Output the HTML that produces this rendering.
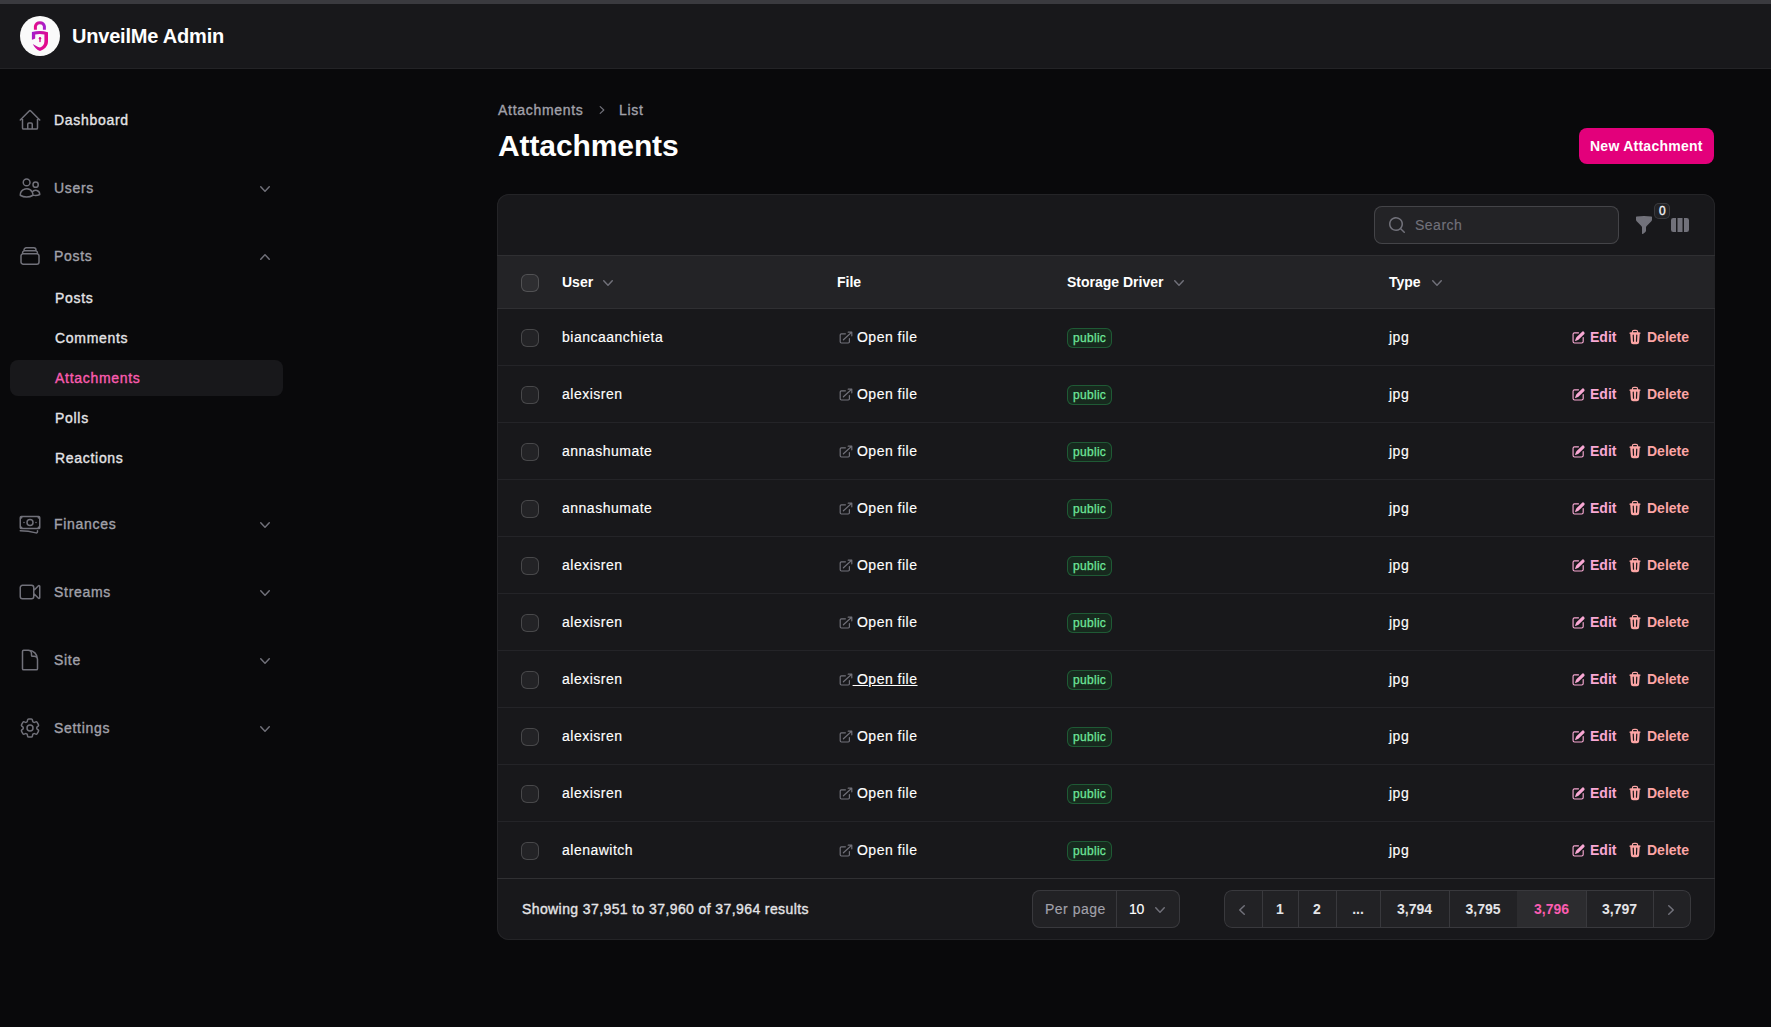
<!DOCTYPE html><html><head><meta charset="utf-8"><style>
*{box-sizing:border-box;margin:0;padding:0}
html,body{width:1771px;height:1027px;overflow:hidden;background:#09090b;font-family:"Liberation Sans",sans-serif;color:#fff}
.abs{position:absolute}
.t{white-space:nowrap;line-height:1}
</style></head><body>
<div class="abs" style="left:0;top:0;width:1771px;height:4px;background:#3a3a3f"></div>
<div class="abs" style="left:0;top:4px;width:1771px;height:65px;background:#18181b;border-bottom:1px solid #232326"></div>
<svg class="abs" style="left:20px;top:16px" width="40" height="40" viewBox="0 0 40 40">
<defs><linearGradient id="lg" x1="0" y1="0" x2="1" y2="0.5"><stop offset="0" stop-color="#9a1fd4"/><stop offset="0.5" stop-color="#cc12a4"/><stop offset="1" stop-color="#e6098a"/></linearGradient>
<linearGradient id="lg2" x1="0" y1="0" x2="1" y2="0"><stop offset="0" stop-color="#e40c8c"/><stop offset="1" stop-color="#a51fcc"/></linearGradient></defs>
<circle cx="20" cy="20" r="20" fill="#fafafa"/>
<path d="M15.4 13.7 V10.3 A4.6 4.6 0 0 1 24.4 10.3 V13.7" fill="none" stroke="url(#lg2)" stroke-width="3"/>
<path d="M11.9 16.1 Q20 14.0 28 16.2 L28 25.5 C28 30 24.5 33.5 20 35 C16.8 33.8 14.2 31.4 12.8 28 C15 29.3 17.5 30.8 20 31.6 C23 30.4 24.4 28 24.4 25.2 L24.4 18.5 Q20 17.6 15.2 18.4 L15.2 22.4 C14.2 22.8 13 23.3 11.9 23.7 Z" fill="url(#lg)"/>
<circle cx="20" cy="22.3" r="1.2" fill="#d8108f"/><rect x="19.3" y="22.5" width="1.4" height="3.6" fill="#d8108f"/>
</svg>
<div class="abs t" style="left:72px;top:26px;font-size:20px;color:#ffffff;font-weight:bold;letter-spacing:-0.2px">UnveilMe Admin</div>
<div class="abs" style="left:10px;top:360px;width:273px;height:36px;border-radius:8px;background:#18181b"></div>
<svg class="abs" style="left:18px;top:108px" width="24" height="24" viewBox="0 0 24 24" fill="none" stroke="#71717a" stroke-width="1.5" stroke-linecap="round" stroke-linejoin="round" ><path d="M2.25 12l8.954-8.955c.44-.439 1.152-.439 1.591 0L21.75 12M4.5 9.75v10.125c0 .621.504 1.125 1.125 1.125H9.75v-4.875c0-.621.504-1.125 1.125-1.125h2.25c.621 0 1.125.504 1.125 1.125V21h4.125c.621 0 1.125-.504 1.125-1.125V9.75M8.25 21h8.25"/></svg>
<div class="abs t" style="left:54px;top:113px;font-size:14px;color:#e4e4e7;font-weight:normal;letter-spacing:0.7px;-webkit-text-stroke:0.35px #e4e4e7;">Dashboard</div>
<svg class="abs" style="left:18px;top:176px" width="24" height="24" viewBox="0 0 24 24" fill="none" stroke="#71717a" stroke-width="1.5" stroke-linecap="round" stroke-linejoin="round" ><path d="M15 19.128a9.38 9.38 0 002.625.372 9.337 9.337 0 004.121-.952 4.125 4.125 0 00-7.533-2.493M15 19.128v-.003c0-1.113-.285-2.16-.786-3.07M15 19.128v.106A12.318 12.318 0 018.624 21c-2.331 0-4.512-.645-6.374-1.766l-.001-.109a6.375 6.375 0 0111.964-3.07M12 6.375a3.375 3.375 0 11-6.75 0 3.375 3.375 0 016.75 0zm8.25 2.25a2.625 2.625 0 11-5.25 0 2.625 2.625 0 015.25 0z"/></svg>
<div class="abs t" style="left:54px;top:181px;font-size:14px;color:#a1a1aa;font-weight:normal;letter-spacing:0.7px;-webkit-text-stroke:0.35px #a1a1aa;">Users</div>
<svg class="abs" style="left:255px;top:179px" width="20" height="20" viewBox="0 0 20 20" fill="#71717a" ><path fill-rule="evenodd" clip-rule="evenodd" d="M5.23 7.21a.75.75 0 011.06.02L10 11.168l3.71-3.938a.75.75 0 111.08 1.04l-4.25 4.5a.75.75 0 01-1.08 0l-4.25-4.5a.75.75 0 01.02-1.06z"/></svg>
<svg class="abs" style="left:18px;top:244px" width="24" height="24" viewBox="0 0 24 24" fill="none" stroke="#71717a" stroke-width="1.5" stroke-linecap="round" stroke-linejoin="round" ><path d="M6 6.878V6a2.25 2.25 0 012.25-2.25h7.5A2.25 2.25 0 0118 6v.878m-12 0c.235-.083.487-.128.75-.128h10.5c.263 0 .515.045.75.128m-12 0A2.25 2.25 0 004.5 9v.878m13.5-3A2.25 2.25 0 0119.5 9v.878m0 0a2.246 2.246 0 00-.75-.128H5.25c-.263 0-.515.045-.75.128m15 0A2.25 2.25 0 0121 12v6a2.25 2.25 0 01-2.25 2.25H5.25A2.25 2.25 0 013 18v-6c0-.98.626-1.813 1.5-2.122"/></svg>
<div class="abs t" style="left:54px;top:249px;font-size:14px;color:#a1a1aa;font-weight:normal;letter-spacing:0.7px;-webkit-text-stroke:0.35px #a1a1aa;">Posts</div>
<svg class="abs" style="left:255px;top:247px" width="20" height="20" viewBox="0 0 20 20" fill="#71717a" ><path fill-rule="evenodd" clip-rule="evenodd" d="M14.77 12.79a.75.75 0 01-1.06-.02L10 8.832 6.29 12.77a.75.75 0 11-1.08-1.04l4.25-4.5a.75.75 0 011.08 0l4.25 4.5a.75.75 0 01-.02 1.06z"/></svg>
<svg class="abs" style="left:18px;top:512px" width="24" height="24" viewBox="0 0 24 24" fill="none" stroke="#71717a" stroke-width="1.5" stroke-linecap="round" stroke-linejoin="round" ><path d="M2.25 18.75a60.07 60.07 0 0115.797 2.101c.727.198 1.453-.342 1.453-1.096V18.75M3.75 4.5v.75A.75.75 0 013 6h-.75m0 0v-.375c0-.621.504-1.125 1.125-1.125H20.25M2.25 6v9m18-10.5v.75c0 .414.336.75.75.75h.75m-1.5-1.5h.375c.621 0 1.125.504 1.125 1.125v9.75c0 .621-.504 1.125-1.125 1.125h-.375m1.5-1.5H21a.75.75 0 00-.75.75v.75m0 0H3.75m0 0h-.375a1.125 1.125 0 01-1.125-1.125V15m1.5 1.5v-.75A.75.75 0 003 15h-.75M15 10.5a3 3 0 11-6 0 3 3 0 016 0zm3 0h.008v.008H18V10.5zm-12 0h.008v.008H6V10.5z"/></svg>
<div class="abs t" style="left:54px;top:517px;font-size:14px;color:#a1a1aa;font-weight:normal;letter-spacing:0.7px;-webkit-text-stroke:0.35px #a1a1aa;">Finances</div>
<svg class="abs" style="left:255px;top:515px" width="20" height="20" viewBox="0 0 20 20" fill="#71717a" ><path fill-rule="evenodd" clip-rule="evenodd" d="M5.23 7.21a.75.75 0 011.06.02L10 11.168l3.71-3.938a.75.75 0 111.08 1.04l-4.25 4.5a.75.75 0 01-1.08 0l-4.25-4.5a.75.75 0 01.02-1.06z"/></svg>
<svg class="abs" style="left:18px;top:580px" width="24" height="24" viewBox="0 0 24 24" fill="none" stroke="#71717a" stroke-width="1.5" stroke-linecap="round" stroke-linejoin="round" ><path d="M15.75 10.5l4.72-4.72a.75.75 0 011.28.53v11.38a.75.75 0 01-1.28.53l-4.72-4.72M4.5 18.75h9a2.25 2.25 0 002.25-2.25v-9a2.25 2.25 0 00-2.25-2.25h-9A2.25 2.25 0 002.25 7.5v9a2.25 2.25 0 002.25 2.25z"/></svg>
<div class="abs t" style="left:54px;top:585px;font-size:14px;color:#a1a1aa;font-weight:normal;letter-spacing:0.7px;-webkit-text-stroke:0.35px #a1a1aa;">Streams</div>
<svg class="abs" style="left:255px;top:583px" width="20" height="20" viewBox="0 0 20 20" fill="#71717a" ><path fill-rule="evenodd" clip-rule="evenodd" d="M5.23 7.21a.75.75 0 011.06.02L10 11.168l3.71-3.938a.75.75 0 111.08 1.04l-4.25 4.5a.75.75 0 01-1.08 0l-4.25-4.5a.75.75 0 01.02-1.06z"/></svg>
<svg class="abs" style="left:18px;top:648px" width="24" height="24" viewBox="0 0 24 24" fill="none" stroke="#71717a" stroke-width="1.5" stroke-linecap="round" stroke-linejoin="round" ><path d="M19.5 14.25v-2.625a3.375 3.375 0 00-3.375-3.375h-1.5A1.125 1.125 0 0113.5 7.125v-1.5a3.375 3.375 0 00-3.375-3.375H8.25m2.25 0H5.625c-.621 0-1.125.504-1.125 1.125v17.25c0 .621.504 1.125 1.125 1.125h12.75c.621 0 1.125-.504 1.125-1.125V11.25a9 9 0 00-9-9z"/></svg>
<div class="abs t" style="left:54px;top:653px;font-size:14px;color:#a1a1aa;font-weight:normal;letter-spacing:0.7px;-webkit-text-stroke:0.35px #a1a1aa;">Site</div>
<svg class="abs" style="left:255px;top:651px" width="20" height="20" viewBox="0 0 20 20" fill="#71717a" ><path fill-rule="evenodd" clip-rule="evenodd" d="M5.23 7.21a.75.75 0 011.06.02L10 11.168l3.71-3.938a.75.75 0 111.08 1.04l-4.25 4.5a.75.75 0 01-1.08 0l-4.25-4.5a.75.75 0 01.02-1.06z"/></svg>
<svg class="abs" style="left:18px;top:716px" width="24" height="24" viewBox="0 0 24 24" fill="none" stroke="#71717a" stroke-width="1.5" stroke-linecap="round" stroke-linejoin="round" ><path d="M9.594 3.94c.09-.542.56-.94 1.11-.94h2.593c.55 0 1.02.398 1.11.94l.213 1.281c.063.374.313.686.645.87.074.04.147.083.22.127.324.196.72.257 1.075.124l1.217-.456a1.125 1.125 0 011.37.49l1.296 2.247a1.125 1.125 0 01-.26 1.431l-1.003.827c-.293.24-.438.613-.431.992a6.759 6.759 0 010 .255c-.007.378.138.75.43.99l1.005.828c.424.35.534.954.26 1.43l-1.298 2.247a1.125 1.125 0 01-1.369.491l-1.217-.456c-.355-.133-.75-.072-1.076.124a6.57 6.57 0 01-.22.128c-.331.183-.581.495-.644.869l-.213 1.28c-.09.543-.56.941-1.11.941h-2.594c-.55 0-1.020-.398-1.110-.94l-.213-1.281c-.062-.374-.312-.686-.644-.87a6.52 6.52 0 01-.22-.127c-.325-.196-.72-.257-1.076-.124l-1.217.456a1.125 1.125 0 01-1.369-.49l-1.297-2.247a1.125 1.125 0 01.26-1.431l1.004-.827c.292-.24.437-.613.43-.992a6.932 6.932 0 010-.255c.007-.378-.138-.75-.43-.99l-1.004-.828a1.125 1.125 0 01-.26-1.43l1.297-2.247a1.125 1.125 0 011.37-.491l1.216.456c.356.133.751.072 1.076-.124.072-.044.146-.087.22-.128.332-.183.582-.495.644-.869l.214-1.281zM15 12a3 3 0 11-6 0 3 3 0 016 0z"/></svg>
<div class="abs t" style="left:54px;top:721px;font-size:14px;color:#a1a1aa;font-weight:normal;letter-spacing:0.7px;-webkit-text-stroke:0.35px #a1a1aa;">Settings</div>
<svg class="abs" style="left:255px;top:719px" width="20" height="20" viewBox="0 0 20 20" fill="#71717a" ><path fill-rule="evenodd" clip-rule="evenodd" d="M5.23 7.21a.75.75 0 011.06.02L10 11.168l3.71-3.938a.75.75 0 111.08 1.04l-4.25 4.5a.75.75 0 01-1.08 0l-4.25-4.5a.75.75 0 01.02-1.06z"/></svg>
<div class="abs t" style="left:55px;top:291px;font-size:14px;color:#e4e4e7;font-weight:normal;letter-spacing:0.7px;-webkit-text-stroke:0.35px #e4e4e7;">Posts</div>
<div class="abs t" style="left:55px;top:331px;font-size:14px;color:#e4e4e7;font-weight:normal;letter-spacing:0.7px;-webkit-text-stroke:0.35px #e4e4e7;">Comments</div>
<div class="abs t" style="left:55px;top:371px;font-size:14px;color:#fa5cb0;font-weight:normal;letter-spacing:0.7px;-webkit-text-stroke:0.35px #fa5cb0;">Attachments</div>
<div class="abs t" style="left:55px;top:411px;font-size:14px;color:#e4e4e7;font-weight:normal;letter-spacing:0.7px;-webkit-text-stroke:0.35px #e4e4e7;">Polls</div>
<div class="abs t" style="left:55px;top:451px;font-size:14px;color:#e4e4e7;font-weight:normal;letter-spacing:0.7px;-webkit-text-stroke:0.35px #e4e4e7;">Reactions</div>
<div class="abs t" style="left:498px;top:103px;font-size:14px;color:#a1a1aa;font-weight:normal;letter-spacing:0.7px;-webkit-text-stroke:0.35px #a1a1aa;">Attachments</div>
<svg class="abs" style="left:594px;top:102px" width="16" height="16" viewBox="0 0 20 20" fill="#71717a" ><path fill-rule="evenodd" clip-rule="evenodd" d="M7.21 14.77a.75.75 0 01.02-1.06L11.168 10 7.23 6.29a.75.75 0 111.04-1.08l4.5 4.25a.75.75 0 010 1.08l-4.5 4.25a.75.75 0 01-1.06-.02z"/></svg>
<div class="abs t" style="left:619px;top:103px;font-size:14px;color:#a1a1aa;font-weight:normal;letter-spacing:0.7px;-webkit-text-stroke:0.35px #a1a1aa;">List</div>
<div class="abs t" style="left:498px;top:131px;font-size:30px;color:#ffffff;font-weight:bold;letter-spacing:-0.1px">Attachments</div>
<div class="abs" style="left:1579px;top:128px;width:135px;height:36px;border-radius:8px;background:#e3007b"></div>
<div class="abs t" style="left:1590px;top:139px;font-size:14px;color:#ffffff;font-weight:bold;letter-spacing:0.25px">New Attachment</div>
<div class="abs" style="left:497px;top:194px;width:1218px;height:746px;border-radius:12px;background:#18181b;box-shadow:0 0 0 1px #242427 inset;overflow:hidden">
<div class="abs" style="left:0;top:61px;width:1218px;height:54px;background:#232326;border-top:1px solid #2f2f32;border-bottom:1px solid #2f2f32"></div>
<div class="abs" style="left:877px;top:12px;width:245px;height:38px;border-radius:8px;background:#232326;box-shadow:inset 0 0 0 1px #444448"></div>
<svg class="abs" style="left:890px;top:21px" width="20" height="20" viewBox="0 0 20 20" fill="#71717a" ><path fill-rule="evenodd" clip-rule="evenodd" d="M9 3.5a5.5 5.5 0 100 11 5.5 5.5 0 000-11zM2 9a7 7 0 1112.452 4.391l3.328 3.329a.75.75 0 11-1.06 1.06l-3.329-3.328A7 7 0 012 9z"/></svg>
<div class="abs t" style="left:918px;top:24px;font-size:14px;color:#71717a;font-weight:normal;letter-spacing:0.5px;-webkit-text-stroke:0.15px #71717a;">Search</div>
<svg class="abs" style="left:1137px;top:21px" width="20" height="20" viewBox="0 0 20 20" fill="#71717a" ><path fill-rule="evenodd" clip-rule="evenodd" d="M2.628 1.601C5.028 1.206 7.49 1 10 1s4.973.206 7.372.601a.75.75 0 01.628.74v2.288a2.25 2.25 0 01-.659 1.59l-4.682 4.683a2.25 2.25 0 00-.659 1.59v3.037c0 .684-.31 1.33-.844 1.757l-1.937 1.55A.75.75 0 018 18.25v-5.757a2.25 2.25 0 00-.659-1.591L2.659 6.22A2.25 2.25 0 012 4.629V2.34a.75.75 0 01.628-.74z"/></svg>
<div class="abs" style="left:1157px;top:9px;width:16px;height:16px;border-radius:5px;background:#222225;box-shadow:inset 0 0 0 1px #3a3a3e"></div>
<div class="abs t" style="left:1162px;top:11px;font-size:12px;color:#f4f4f5;font-weight:normal;letter-spacing:0.7px;-webkit-text-stroke:0.35px #f4f4f5;letter-spacing:0">0</div>
<svg class="abs" style="left:1173px;top:21px" width="20" height="20" viewBox="0 0 20 20" fill="#71717a" ><path fill-rule="evenodd" clip-rule="evenodd" d="M14 17h2.75A2.25 2.25 0 0019 14.75v-9.5A2.25 2.25 0 0016.75 3H14v14zM12.5 3h-5v14h5V3zM3.25 3H6v14H3.25A2.25 2.25 0 011 14.75v-9.5A2.25 2.25 0 013.25 3z"/></svg>
<div class="abs" style="left:24px;top:80px;width:18px;height:18px;border-radius:6px;background:rgba(255,255,255,0.05);box-shadow:inset 0 0 0 1px rgba(255,255,255,0.17)"></div>
<div class="abs t" style="left:65px;top:81px;font-size:14px;color:#ffffff;font-weight:bold;">User</div>
<svg class="abs" style="left:101px;top:79px" width="20" height="20" viewBox="0 0 20 20" fill="#71717a" ><path fill-rule="evenodd" clip-rule="evenodd" d="M5.23 7.21a.75.75 0 011.06.02L10 11.168l3.71-3.938a.75.75 0 111.08 1.04l-4.25 4.5a.75.75 0 01-1.08 0l-4.25-4.5a.75.75 0 01.02-1.06z"/></svg>
<div class="abs t" style="left:340px;top:81px;font-size:14px;color:#ffffff;font-weight:bold;">File</div>
<div class="abs t" style="left:570px;top:81px;font-size:14px;color:#ffffff;font-weight:bold;">Storage Driver</div>
<svg class="abs" style="left:672px;top:79px" width="20" height="20" viewBox="0 0 20 20" fill="#71717a" ><path fill-rule="evenodd" clip-rule="evenodd" d="M5.23 7.21a.75.75 0 011.06.02L10 11.168l3.71-3.938a.75.75 0 111.08 1.04l-4.25 4.5a.75.75 0 01-1.08 0l-4.25-4.5a.75.75 0 01.02-1.06z"/></svg>
<div class="abs t" style="left:892px;top:81px;font-size:14px;color:#ffffff;font-weight:bold;">Type</div>
<svg class="abs" style="left:930px;top:79px" width="20" height="20" viewBox="0 0 20 20" fill="#71717a" ><path fill-rule="evenodd" clip-rule="evenodd" d="M5.23 7.21a.75.75 0 011.06.02L10 11.168l3.71-3.938a.75.75 0 111.08 1.04l-4.25 4.5a.75.75 0 01-1.08 0l-4.25-4.5a.75.75 0 01.02-1.06z"/></svg>
<div class="abs" style="left:24px;top:135px;width:18px;height:18px;border-radius:6px;background:rgba(255,255,255,0.05);box-shadow:inset 0 0 0 1px rgba(255,255,255,0.17)"></div>
<div class="abs t" style="left:65px;top:136px;font-size:14px;color:#ffffff;font-weight:normal;letter-spacing:0.5px;-webkit-text-stroke:0.15px #ffffff;">biancaanchieta</div>
<svg class="abs" style="left:341px;top:136px" width="16" height="16" viewBox="0 0 20 20" fill="#71717a" ><path fill-rule="evenodd" clip-rule="evenodd" d="M4.25 5.5a.75.75 0 00-.75.75v8.5c0 .414.336.75.75.75h8.5a.75.75 0 00.75-.75v-4a.75.75 0 011.5 0v4A2.25 2.25 0 0112.75 17h-8.5A2.25 2.25 0 012 14.75v-8.5A2.25 2.25 0 014.25 4h5a.75.75 0 010 1.5h-5zM6.194 12.753a.75.75 0 001.06.053L16.5 4.44v2.81a.75.75 0 001.5 0v-4.5a.75.75 0 00-.75-.75h-4.5a.75.75 0 000 1.5h2.553l-9.056 8.194a.75.75 0 00-.053 1.06z"/></svg>
<div class="abs t" style="left:355.6px;top:136px;font-size:14px;color:#ffffff;font-weight:normal;letter-spacing:0.5px;-webkit-text-stroke:0.15px #ffffff;">&nbsp;Open file</div>
<div class="abs" style="left:570px;top:134px;width:45px;height:20px;border-radius:6px;background:#17291e;box-shadow:inset 0 0 0 1px #1f5a35"></div>
<div class="abs t" style="left:576px;top:138px;font-size:12px;color:#6ee79a;font-weight:normal;letter-spacing:0.7px;-webkit-text-stroke:0.35px #6ee79a;letter-spacing:0.3px;-webkit-text-stroke:0.25px #6ee79a">public</div>
<div class="abs t" style="left:892px;top:136px;font-size:14px;color:#ffffff;font-weight:normal;letter-spacing:0.5px;-webkit-text-stroke:0.15px #ffffff;">jpg</div>
<svg class="abs" style="left:1074px;top:136px" width="15" height="15" viewBox="0 0 20 20" fill="#f9a8d4" ><path fill-rule="evenodd" clip-rule="evenodd" d="M5.433 13.917l1.262-3.155A4 4 0 017.58 9.42l6.92-6.918a2.121 2.121 0 013 3l-6.92 6.918c-.383.383-.84.685-1.343.886l-3.154 1.262a.5.5 0 01-.65-.65z M3.5 5.75c0-.69.56-1.25 1.250-1.25H10A.75.75 0 0010 3H4.75A2.75 2.75 0 002 5.750v9.5A2.75 2.75 0 004.75 18h9.5A2.75 2.75 0 0017 15.25V10a.75.75 0 00-1.5 0v5.25c0 .69-.56 1.25-1.25 1.25h-9.5c-.69 0-1.25-.56-1.25-1.25v-9.5z"/></svg>
<div class="abs t" style="left:1093px;top:136px;font-size:14px;color:#f9a8d4;font-weight:bold;">Edit</div>
<svg class="abs" style="left:1130px;top:135px" width="16" height="16" viewBox="0 0 20 20" fill="#fca5a5" ><path fill-rule="evenodd" clip-rule="evenodd" d="M8.75 1A2.75 2.75 0 006 3.75v.443c-.795.077-1.584.176-2.365.298a.75.75 0 10.23 1.482l.149-.022.841 10.518A2.75 2.75 0 007.596 19h4.807a2.75 2.75 0 002.742-2.53l.841-10.52.149.023a.75.75 0 00.23-1.482A41.03 41.03 0 0014 4.193V3.75A2.75 2.75 0 0011.25 1h-2.5zM10 4c.84 0 1.673.025 2.5.075V3.75c0-.69-.56-1.25-1.25-1.25h-2.5c-.69 0-1.25.56-1.25 1.25v.325C8.327 4.025 9.16 4 10 4zM8.58 7.72a.75.75 0 00-1.5.06l.3 7.5a.75.75 0 101.5-.06l-.3-7.5zm4.34.06a.75.75 0 10-1.5-.06l-.3 7.5a.75.75 0 101.5.06l.3-7.5z"/></svg>
<div class="abs t" style="left:1150px;top:136px;font-size:14px;color:#fca5a5;font-weight:bold;">Delete</div>
<div class="abs" style="left:0;top:171px;width:1218px;height:1px;background:#242428"></div>
<div class="abs" style="left:24px;top:192px;width:18px;height:18px;border-radius:6px;background:rgba(255,255,255,0.05);box-shadow:inset 0 0 0 1px rgba(255,255,255,0.17)"></div>
<div class="abs t" style="left:65px;top:193px;font-size:14px;color:#ffffff;font-weight:normal;letter-spacing:0.5px;-webkit-text-stroke:0.15px #ffffff;">alexisren</div>
<svg class="abs" style="left:341px;top:193px" width="16" height="16" viewBox="0 0 20 20" fill="#71717a" ><path fill-rule="evenodd" clip-rule="evenodd" d="M4.25 5.5a.75.75 0 00-.75.75v8.5c0 .414.336.75.75.75h8.5a.75.75 0 00.75-.75v-4a.75.75 0 011.5 0v4A2.25 2.25 0 0112.75 17h-8.5A2.25 2.25 0 012 14.75v-8.5A2.25 2.25 0 014.25 4h5a.75.75 0 010 1.5h-5zM6.194 12.753a.75.75 0 001.06.053L16.5 4.44v2.81a.75.75 0 001.5 0v-4.5a.75.75 0 00-.75-.75h-4.5a.75.75 0 000 1.5h2.553l-9.056 8.194a.75.75 0 00-.053 1.06z"/></svg>
<div class="abs t" style="left:355.6px;top:193px;font-size:14px;color:#ffffff;font-weight:normal;letter-spacing:0.5px;-webkit-text-stroke:0.15px #ffffff;">&nbsp;Open file</div>
<div class="abs" style="left:570px;top:191px;width:45px;height:20px;border-radius:6px;background:#17291e;box-shadow:inset 0 0 0 1px #1f5a35"></div>
<div class="abs t" style="left:576px;top:195px;font-size:12px;color:#6ee79a;font-weight:normal;letter-spacing:0.7px;-webkit-text-stroke:0.35px #6ee79a;letter-spacing:0.3px;-webkit-text-stroke:0.25px #6ee79a">public</div>
<div class="abs t" style="left:892px;top:193px;font-size:14px;color:#ffffff;font-weight:normal;letter-spacing:0.5px;-webkit-text-stroke:0.15px #ffffff;">jpg</div>
<svg class="abs" style="left:1074px;top:193px" width="15" height="15" viewBox="0 0 20 20" fill="#f9a8d4" ><path fill-rule="evenodd" clip-rule="evenodd" d="M5.433 13.917l1.262-3.155A4 4 0 017.58 9.42l6.92-6.918a2.121 2.121 0 013 3l-6.92 6.918c-.383.383-.84.685-1.343.886l-3.154 1.262a.5.5 0 01-.65-.65z M3.5 5.75c0-.69.56-1.25 1.250-1.25H10A.75.75 0 0010 3H4.75A2.75 2.75 0 002 5.750v9.5A2.75 2.75 0 004.75 18h9.5A2.75 2.75 0 0017 15.25V10a.75.75 0 00-1.5 0v5.25c0 .69-.56 1.25-1.25 1.25h-9.5c-.69 0-1.25-.56-1.25-1.25v-9.5z"/></svg>
<div class="abs t" style="left:1093px;top:193px;font-size:14px;color:#f9a8d4;font-weight:bold;">Edit</div>
<svg class="abs" style="left:1130px;top:192px" width="16" height="16" viewBox="0 0 20 20" fill="#fca5a5" ><path fill-rule="evenodd" clip-rule="evenodd" d="M8.75 1A2.75 2.75 0 006 3.75v.443c-.795.077-1.584.176-2.365.298a.75.75 0 10.23 1.482l.149-.022.841 10.518A2.75 2.75 0 007.596 19h4.807a2.75 2.75 0 002.742-2.53l.841-10.52.149.023a.75.75 0 00.23-1.482A41.03 41.03 0 0014 4.193V3.75A2.75 2.75 0 0011.25 1h-2.5zM10 4c.84 0 1.673.025 2.5.075V3.75c0-.69-.56-1.25-1.25-1.25h-2.5c-.69 0-1.25.56-1.25 1.25v.325C8.327 4.025 9.16 4 10 4zM8.58 7.72a.75.75 0 00-1.5.06l.3 7.5a.75.75 0 101.5-.06l-.3-7.5zm4.34.06a.75.75 0 10-1.5-.06l-.3 7.5a.75.75 0 101.5.06l.3-7.5z"/></svg>
<div class="abs t" style="left:1150px;top:193px;font-size:14px;color:#fca5a5;font-weight:bold;">Delete</div>
<div class="abs" style="left:0;top:228px;width:1218px;height:1px;background:#242428"></div>
<div class="abs" style="left:24px;top:249px;width:18px;height:18px;border-radius:6px;background:rgba(255,255,255,0.05);box-shadow:inset 0 0 0 1px rgba(255,255,255,0.17)"></div>
<div class="abs t" style="left:65px;top:250px;font-size:14px;color:#ffffff;font-weight:normal;letter-spacing:0.5px;-webkit-text-stroke:0.15px #ffffff;">annashumate</div>
<svg class="abs" style="left:341px;top:250px" width="16" height="16" viewBox="0 0 20 20" fill="#71717a" ><path fill-rule="evenodd" clip-rule="evenodd" d="M4.25 5.5a.75.75 0 00-.75.75v8.5c0 .414.336.75.75.75h8.5a.75.75 0 00.75-.75v-4a.75.75 0 011.5 0v4A2.25 2.25 0 0112.75 17h-8.5A2.25 2.25 0 012 14.75v-8.5A2.25 2.25 0 014.25 4h5a.75.75 0 010 1.5h-5zM6.194 12.753a.75.75 0 001.06.053L16.5 4.44v2.81a.75.75 0 001.5 0v-4.5a.75.75 0 00-.75-.75h-4.5a.75.75 0 000 1.5h2.553l-9.056 8.194a.75.75 0 00-.053 1.06z"/></svg>
<div class="abs t" style="left:355.6px;top:250px;font-size:14px;color:#ffffff;font-weight:normal;letter-spacing:0.5px;-webkit-text-stroke:0.15px #ffffff;">&nbsp;Open file</div>
<div class="abs" style="left:570px;top:248px;width:45px;height:20px;border-radius:6px;background:#17291e;box-shadow:inset 0 0 0 1px #1f5a35"></div>
<div class="abs t" style="left:576px;top:252px;font-size:12px;color:#6ee79a;font-weight:normal;letter-spacing:0.7px;-webkit-text-stroke:0.35px #6ee79a;letter-spacing:0.3px;-webkit-text-stroke:0.25px #6ee79a">public</div>
<div class="abs t" style="left:892px;top:250px;font-size:14px;color:#ffffff;font-weight:normal;letter-spacing:0.5px;-webkit-text-stroke:0.15px #ffffff;">jpg</div>
<svg class="abs" style="left:1074px;top:250px" width="15" height="15" viewBox="0 0 20 20" fill="#f9a8d4" ><path fill-rule="evenodd" clip-rule="evenodd" d="M5.433 13.917l1.262-3.155A4 4 0 017.58 9.42l6.92-6.918a2.121 2.121 0 013 3l-6.92 6.918c-.383.383-.84.685-1.343.886l-3.154 1.262a.5.5 0 01-.65-.65z M3.5 5.75c0-.69.56-1.25 1.250-1.25H10A.75.75 0 0010 3H4.75A2.75 2.75 0 002 5.750v9.5A2.75 2.75 0 004.75 18h9.5A2.75 2.75 0 0017 15.25V10a.75.75 0 00-1.5 0v5.25c0 .69-.56 1.25-1.25 1.25h-9.5c-.69 0-1.25-.56-1.25-1.25v-9.5z"/></svg>
<div class="abs t" style="left:1093px;top:250px;font-size:14px;color:#f9a8d4;font-weight:bold;">Edit</div>
<svg class="abs" style="left:1130px;top:249px" width="16" height="16" viewBox="0 0 20 20" fill="#fca5a5" ><path fill-rule="evenodd" clip-rule="evenodd" d="M8.75 1A2.75 2.75 0 006 3.75v.443c-.795.077-1.584.176-2.365.298a.75.75 0 10.23 1.482l.149-.022.841 10.518A2.75 2.75 0 007.596 19h4.807a2.75 2.75 0 002.742-2.53l.841-10.52.149.023a.75.75 0 00.23-1.482A41.03 41.03 0 0014 4.193V3.75A2.75 2.75 0 0011.25 1h-2.5zM10 4c.84 0 1.673.025 2.5.075V3.75c0-.69-.56-1.25-1.25-1.25h-2.5c-.69 0-1.25.56-1.25 1.25v.325C8.327 4.025 9.16 4 10 4zM8.58 7.72a.75.75 0 00-1.5.06l.3 7.5a.75.75 0 101.5-.06l-.3-7.5zm4.34.06a.75.75 0 10-1.5-.06l-.3 7.5a.75.75 0 101.5.06l.3-7.5z"/></svg>
<div class="abs t" style="left:1150px;top:250px;font-size:14px;color:#fca5a5;font-weight:bold;">Delete</div>
<div class="abs" style="left:0;top:285px;width:1218px;height:1px;background:#242428"></div>
<div class="abs" style="left:24px;top:306px;width:18px;height:18px;border-radius:6px;background:rgba(255,255,255,0.05);box-shadow:inset 0 0 0 1px rgba(255,255,255,0.17)"></div>
<div class="abs t" style="left:65px;top:307px;font-size:14px;color:#ffffff;font-weight:normal;letter-spacing:0.5px;-webkit-text-stroke:0.15px #ffffff;">annashumate</div>
<svg class="abs" style="left:341px;top:307px" width="16" height="16" viewBox="0 0 20 20" fill="#71717a" ><path fill-rule="evenodd" clip-rule="evenodd" d="M4.25 5.5a.75.75 0 00-.75.75v8.5c0 .414.336.75.75.75h8.5a.75.75 0 00.75-.75v-4a.75.75 0 011.5 0v4A2.25 2.25 0 0112.75 17h-8.5A2.25 2.25 0 012 14.75v-8.5A2.25 2.25 0 014.25 4h5a.75.75 0 010 1.5h-5zM6.194 12.753a.75.75 0 001.06.053L16.5 4.44v2.81a.75.75 0 001.5 0v-4.5a.75.75 0 00-.75-.75h-4.5a.75.75 0 000 1.5h2.553l-9.056 8.194a.75.75 0 00-.053 1.06z"/></svg>
<div class="abs t" style="left:355.6px;top:307px;font-size:14px;color:#ffffff;font-weight:normal;letter-spacing:0.5px;-webkit-text-stroke:0.15px #ffffff;">&nbsp;Open file</div>
<div class="abs" style="left:570px;top:305px;width:45px;height:20px;border-radius:6px;background:#17291e;box-shadow:inset 0 0 0 1px #1f5a35"></div>
<div class="abs t" style="left:576px;top:309px;font-size:12px;color:#6ee79a;font-weight:normal;letter-spacing:0.7px;-webkit-text-stroke:0.35px #6ee79a;letter-spacing:0.3px;-webkit-text-stroke:0.25px #6ee79a">public</div>
<div class="abs t" style="left:892px;top:307px;font-size:14px;color:#ffffff;font-weight:normal;letter-spacing:0.5px;-webkit-text-stroke:0.15px #ffffff;">jpg</div>
<svg class="abs" style="left:1074px;top:307px" width="15" height="15" viewBox="0 0 20 20" fill="#f9a8d4" ><path fill-rule="evenodd" clip-rule="evenodd" d="M5.433 13.917l1.262-3.155A4 4 0 017.58 9.42l6.92-6.918a2.121 2.121 0 013 3l-6.92 6.918c-.383.383-.84.685-1.343.886l-3.154 1.262a.5.5 0 01-.65-.65z M3.5 5.75c0-.69.56-1.25 1.250-1.25H10A.75.75 0 0010 3H4.75A2.75 2.75 0 002 5.750v9.5A2.75 2.75 0 004.75 18h9.5A2.75 2.75 0 0017 15.25V10a.75.75 0 00-1.5 0v5.25c0 .69-.56 1.25-1.25 1.25h-9.5c-.69 0-1.25-.56-1.25-1.25v-9.5z"/></svg>
<div class="abs t" style="left:1093px;top:307px;font-size:14px;color:#f9a8d4;font-weight:bold;">Edit</div>
<svg class="abs" style="left:1130px;top:306px" width="16" height="16" viewBox="0 0 20 20" fill="#fca5a5" ><path fill-rule="evenodd" clip-rule="evenodd" d="M8.75 1A2.75 2.75 0 006 3.75v.443c-.795.077-1.584.176-2.365.298a.75.75 0 10.23 1.482l.149-.022.841 10.518A2.75 2.75 0 007.596 19h4.807a2.75 2.75 0 002.742-2.53l.841-10.52.149.023a.75.75 0 00.23-1.482A41.03 41.03 0 0014 4.193V3.75A2.75 2.75 0 0011.25 1h-2.5zM10 4c.84 0 1.673.025 2.5.075V3.75c0-.69-.56-1.25-1.25-1.25h-2.5c-.69 0-1.25.56-1.25 1.25v.325C8.327 4.025 9.16 4 10 4zM8.58 7.72a.75.75 0 00-1.5.06l.3 7.5a.75.75 0 101.5-.06l-.3-7.5zm4.34.06a.75.75 0 10-1.5-.06l-.3 7.5a.75.75 0 101.5.06l.3-7.5z"/></svg>
<div class="abs t" style="left:1150px;top:307px;font-size:14px;color:#fca5a5;font-weight:bold;">Delete</div>
<div class="abs" style="left:0;top:342px;width:1218px;height:1px;background:#242428"></div>
<div class="abs" style="left:24px;top:363px;width:18px;height:18px;border-radius:6px;background:rgba(255,255,255,0.05);box-shadow:inset 0 0 0 1px rgba(255,255,255,0.17)"></div>
<div class="abs t" style="left:65px;top:364px;font-size:14px;color:#ffffff;font-weight:normal;letter-spacing:0.5px;-webkit-text-stroke:0.15px #ffffff;">alexisren</div>
<svg class="abs" style="left:341px;top:364px" width="16" height="16" viewBox="0 0 20 20" fill="#71717a" ><path fill-rule="evenodd" clip-rule="evenodd" d="M4.25 5.5a.75.75 0 00-.75.75v8.5c0 .414.336.75.75.75h8.5a.75.75 0 00.75-.75v-4a.75.75 0 011.5 0v4A2.25 2.25 0 0112.75 17h-8.5A2.25 2.25 0 012 14.75v-8.5A2.25 2.25 0 014.25 4h5a.75.75 0 010 1.5h-5zM6.194 12.753a.75.75 0 001.06.053L16.5 4.44v2.81a.75.75 0 001.5 0v-4.5a.75.75 0 00-.75-.75h-4.5a.75.75 0 000 1.5h2.553l-9.056 8.194a.75.75 0 00-.053 1.06z"/></svg>
<div class="abs t" style="left:355.6px;top:364px;font-size:14px;color:#ffffff;font-weight:normal;letter-spacing:0.5px;-webkit-text-stroke:0.15px #ffffff;">&nbsp;Open file</div>
<div class="abs" style="left:570px;top:362px;width:45px;height:20px;border-radius:6px;background:#17291e;box-shadow:inset 0 0 0 1px #1f5a35"></div>
<div class="abs t" style="left:576px;top:366px;font-size:12px;color:#6ee79a;font-weight:normal;letter-spacing:0.7px;-webkit-text-stroke:0.35px #6ee79a;letter-spacing:0.3px;-webkit-text-stroke:0.25px #6ee79a">public</div>
<div class="abs t" style="left:892px;top:364px;font-size:14px;color:#ffffff;font-weight:normal;letter-spacing:0.5px;-webkit-text-stroke:0.15px #ffffff;">jpg</div>
<svg class="abs" style="left:1074px;top:364px" width="15" height="15" viewBox="0 0 20 20" fill="#f9a8d4" ><path fill-rule="evenodd" clip-rule="evenodd" d="M5.433 13.917l1.262-3.155A4 4 0 017.58 9.42l6.92-6.918a2.121 2.121 0 013 3l-6.92 6.918c-.383.383-.84.685-1.343.886l-3.154 1.262a.5.5 0 01-.65-.65z M3.5 5.75c0-.69.56-1.25 1.250-1.25H10A.75.75 0 0010 3H4.75A2.75 2.75 0 002 5.750v9.5A2.75 2.75 0 004.75 18h9.5A2.75 2.75 0 0017 15.25V10a.75.75 0 00-1.5 0v5.25c0 .69-.56 1.25-1.25 1.25h-9.5c-.69 0-1.25-.56-1.25-1.25v-9.5z"/></svg>
<div class="abs t" style="left:1093px;top:364px;font-size:14px;color:#f9a8d4;font-weight:bold;">Edit</div>
<svg class="abs" style="left:1130px;top:363px" width="16" height="16" viewBox="0 0 20 20" fill="#fca5a5" ><path fill-rule="evenodd" clip-rule="evenodd" d="M8.75 1A2.75 2.75 0 006 3.75v.443c-.795.077-1.584.176-2.365.298a.75.75 0 10.23 1.482l.149-.022.841 10.518A2.75 2.75 0 007.596 19h4.807a2.75 2.75 0 002.742-2.53l.841-10.52.149.023a.75.75 0 00.23-1.482A41.03 41.03 0 0014 4.193V3.75A2.75 2.75 0 0011.25 1h-2.5zM10 4c.84 0 1.673.025 2.5.075V3.75c0-.69-.56-1.25-1.25-1.25h-2.5c-.69 0-1.25.56-1.25 1.25v.325C8.327 4.025 9.16 4 10 4zM8.58 7.72a.75.75 0 00-1.5.06l.3 7.5a.75.75 0 101.5-.06l-.3-7.5zm4.34.06a.75.75 0 10-1.5-.06l-.3 7.5a.75.75 0 101.5.06l.3-7.5z"/></svg>
<div class="abs t" style="left:1150px;top:364px;font-size:14px;color:#fca5a5;font-weight:bold;">Delete</div>
<div class="abs" style="left:0;top:399px;width:1218px;height:1px;background:#242428"></div>
<div class="abs" style="left:24px;top:420px;width:18px;height:18px;border-radius:6px;background:rgba(255,255,255,0.05);box-shadow:inset 0 0 0 1px rgba(255,255,255,0.17)"></div>
<div class="abs t" style="left:65px;top:421px;font-size:14px;color:#ffffff;font-weight:normal;letter-spacing:0.5px;-webkit-text-stroke:0.15px #ffffff;">alexisren</div>
<svg class="abs" style="left:341px;top:421px" width="16" height="16" viewBox="0 0 20 20" fill="#71717a" ><path fill-rule="evenodd" clip-rule="evenodd" d="M4.25 5.5a.75.75 0 00-.75.75v8.5c0 .414.336.75.75.75h8.5a.75.75 0 00.75-.75v-4a.75.75 0 011.5 0v4A2.25 2.25 0 0112.75 17h-8.5A2.25 2.25 0 012 14.75v-8.5A2.25 2.25 0 014.25 4h5a.75.75 0 010 1.5h-5zM6.194 12.753a.75.75 0 001.06.053L16.5 4.44v2.81a.75.75 0 001.5 0v-4.5a.75.75 0 00-.75-.75h-4.5a.75.75 0 000 1.5h2.553l-9.056 8.194a.75.75 0 00-.053 1.06z"/></svg>
<div class="abs t" style="left:355.6px;top:421px;font-size:14px;color:#ffffff;font-weight:normal;letter-spacing:0.5px;-webkit-text-stroke:0.15px #ffffff;">&nbsp;Open file</div>
<div class="abs" style="left:570px;top:419px;width:45px;height:20px;border-radius:6px;background:#17291e;box-shadow:inset 0 0 0 1px #1f5a35"></div>
<div class="abs t" style="left:576px;top:423px;font-size:12px;color:#6ee79a;font-weight:normal;letter-spacing:0.7px;-webkit-text-stroke:0.35px #6ee79a;letter-spacing:0.3px;-webkit-text-stroke:0.25px #6ee79a">public</div>
<div class="abs t" style="left:892px;top:421px;font-size:14px;color:#ffffff;font-weight:normal;letter-spacing:0.5px;-webkit-text-stroke:0.15px #ffffff;">jpg</div>
<svg class="abs" style="left:1074px;top:421px" width="15" height="15" viewBox="0 0 20 20" fill="#f9a8d4" ><path fill-rule="evenodd" clip-rule="evenodd" d="M5.433 13.917l1.262-3.155A4 4 0 017.58 9.42l6.92-6.918a2.121 2.121 0 013 3l-6.92 6.918c-.383.383-.84.685-1.343.886l-3.154 1.262a.5.5 0 01-.65-.65z M3.5 5.75c0-.69.56-1.25 1.250-1.25H10A.75.75 0 0010 3H4.75A2.75 2.75 0 002 5.750v9.5A2.75 2.75 0 004.75 18h9.5A2.75 2.75 0 0017 15.25V10a.75.75 0 00-1.5 0v5.25c0 .69-.56 1.25-1.25 1.25h-9.5c-.69 0-1.25-.56-1.25-1.25v-9.5z"/></svg>
<div class="abs t" style="left:1093px;top:421px;font-size:14px;color:#f9a8d4;font-weight:bold;">Edit</div>
<svg class="abs" style="left:1130px;top:420px" width="16" height="16" viewBox="0 0 20 20" fill="#fca5a5" ><path fill-rule="evenodd" clip-rule="evenodd" d="M8.75 1A2.75 2.75 0 006 3.75v.443c-.795.077-1.584.176-2.365.298a.75.75 0 10.23 1.482l.149-.022.841 10.518A2.75 2.75 0 007.596 19h4.807a2.75 2.75 0 002.742-2.53l.841-10.52.149.023a.75.75 0 00.23-1.482A41.03 41.03 0 0014 4.193V3.75A2.75 2.75 0 0011.25 1h-2.5zM10 4c.84 0 1.673.025 2.5.075V3.75c0-.69-.56-1.25-1.25-1.25h-2.5c-.69 0-1.25.56-1.25 1.25v.325C8.327 4.025 9.16 4 10 4zM8.58 7.72a.75.75 0 00-1.5.06l.3 7.5a.75.75 0 101.5-.06l-.3-7.5zm4.34.06a.75.75 0 10-1.5-.06l-.3 7.5a.75.75 0 101.5.06l.3-7.5z"/></svg>
<div class="abs t" style="left:1150px;top:421px;font-size:14px;color:#fca5a5;font-weight:bold;">Delete</div>
<div class="abs" style="left:0;top:456px;width:1218px;height:1px;background:#242428"></div>
<div class="abs" style="left:24px;top:477px;width:18px;height:18px;border-radius:6px;background:rgba(255,255,255,0.05);box-shadow:inset 0 0 0 1px rgba(255,255,255,0.17)"></div>
<div class="abs t" style="left:65px;top:478px;font-size:14px;color:#ffffff;font-weight:normal;letter-spacing:0.5px;-webkit-text-stroke:0.15px #ffffff;">alexisren</div>
<svg class="abs" style="left:341px;top:478px" width="16" height="16" viewBox="0 0 20 20" fill="#71717a" ><path fill-rule="evenodd" clip-rule="evenodd" d="M4.25 5.5a.75.75 0 00-.75.75v8.5c0 .414.336.75.75.75h8.5a.75.75 0 00.75-.75v-4a.75.75 0 011.5 0v4A2.25 2.25 0 0112.75 17h-8.5A2.25 2.25 0 012 14.75v-8.5A2.25 2.25 0 014.25 4h5a.75.75 0 010 1.5h-5zM6.194 12.753a.75.75 0 001.06.053L16.5 4.44v2.81a.75.75 0 001.5 0v-4.5a.75.75 0 00-.75-.75h-4.5a.75.75 0 000 1.5h2.553l-9.056 8.194a.75.75 0 00-.053 1.06z"/></svg>
<div class="abs t" style="left:355.6px;top:478px;font-size:14px;color:#ffffff;font-weight:normal;letter-spacing:0.5px;-webkit-text-stroke:0.15px #ffffff;text-decoration:underline;">&nbsp;Open file</div>
<div class="abs" style="left:570px;top:476px;width:45px;height:20px;border-radius:6px;background:#17291e;box-shadow:inset 0 0 0 1px #1f5a35"></div>
<div class="abs t" style="left:576px;top:480px;font-size:12px;color:#6ee79a;font-weight:normal;letter-spacing:0.7px;-webkit-text-stroke:0.35px #6ee79a;letter-spacing:0.3px;-webkit-text-stroke:0.25px #6ee79a">public</div>
<div class="abs t" style="left:892px;top:478px;font-size:14px;color:#ffffff;font-weight:normal;letter-spacing:0.5px;-webkit-text-stroke:0.15px #ffffff;">jpg</div>
<svg class="abs" style="left:1074px;top:478px" width="15" height="15" viewBox="0 0 20 20" fill="#f9a8d4" ><path fill-rule="evenodd" clip-rule="evenodd" d="M5.433 13.917l1.262-3.155A4 4 0 017.58 9.42l6.92-6.918a2.121 2.121 0 013 3l-6.92 6.918c-.383.383-.84.685-1.343.886l-3.154 1.262a.5.5 0 01-.65-.65z M3.5 5.75c0-.69.56-1.25 1.250-1.25H10A.75.75 0 0010 3H4.75A2.75 2.75 0 002 5.750v9.5A2.75 2.75 0 004.75 18h9.5A2.75 2.75 0 0017 15.25V10a.75.75 0 00-1.5 0v5.25c0 .69-.56 1.25-1.25 1.25h-9.5c-.69 0-1.25-.56-1.25-1.25v-9.5z"/></svg>
<div class="abs t" style="left:1093px;top:478px;font-size:14px;color:#f9a8d4;font-weight:bold;">Edit</div>
<svg class="abs" style="left:1130px;top:477px" width="16" height="16" viewBox="0 0 20 20" fill="#fca5a5" ><path fill-rule="evenodd" clip-rule="evenodd" d="M8.75 1A2.75 2.75 0 006 3.75v.443c-.795.077-1.584.176-2.365.298a.75.75 0 10.23 1.482l.149-.022.841 10.518A2.75 2.75 0 007.596 19h4.807a2.75 2.75 0 002.742-2.53l.841-10.52.149.023a.75.75 0 00.23-1.482A41.03 41.03 0 0014 4.193V3.75A2.75 2.75 0 0011.25 1h-2.5zM10 4c.84 0 1.673.025 2.5.075V3.75c0-.69-.56-1.25-1.25-1.25h-2.5c-.69 0-1.25.56-1.25 1.25v.325C8.327 4.025 9.16 4 10 4zM8.58 7.72a.75.75 0 00-1.5.06l.3 7.5a.75.75 0 101.5-.06l-.3-7.5zm4.34.06a.75.75 0 10-1.5-.06l-.3 7.5a.75.75 0 101.5.06l.3-7.5z"/></svg>
<div class="abs t" style="left:1150px;top:478px;font-size:14px;color:#fca5a5;font-weight:bold;">Delete</div>
<div class="abs" style="left:0;top:513px;width:1218px;height:1px;background:#242428"></div>
<div class="abs" style="left:24px;top:534px;width:18px;height:18px;border-radius:6px;background:rgba(255,255,255,0.05);box-shadow:inset 0 0 0 1px rgba(255,255,255,0.17)"></div>
<div class="abs t" style="left:65px;top:535px;font-size:14px;color:#ffffff;font-weight:normal;letter-spacing:0.5px;-webkit-text-stroke:0.15px #ffffff;">alexisren</div>
<svg class="abs" style="left:341px;top:535px" width="16" height="16" viewBox="0 0 20 20" fill="#71717a" ><path fill-rule="evenodd" clip-rule="evenodd" d="M4.25 5.5a.75.75 0 00-.75.75v8.5c0 .414.336.75.75.75h8.5a.75.75 0 00.75-.75v-4a.75.75 0 011.5 0v4A2.25 2.25 0 0112.75 17h-8.5A2.25 2.25 0 012 14.75v-8.5A2.25 2.25 0 014.25 4h5a.75.75 0 010 1.5h-5zM6.194 12.753a.75.75 0 001.06.053L16.5 4.44v2.81a.75.75 0 001.5 0v-4.5a.75.75 0 00-.75-.75h-4.5a.75.75 0 000 1.5h2.553l-9.056 8.194a.75.75 0 00-.053 1.06z"/></svg>
<div class="abs t" style="left:355.6px;top:535px;font-size:14px;color:#ffffff;font-weight:normal;letter-spacing:0.5px;-webkit-text-stroke:0.15px #ffffff;">&nbsp;Open file</div>
<div class="abs" style="left:570px;top:533px;width:45px;height:20px;border-radius:6px;background:#17291e;box-shadow:inset 0 0 0 1px #1f5a35"></div>
<div class="abs t" style="left:576px;top:537px;font-size:12px;color:#6ee79a;font-weight:normal;letter-spacing:0.7px;-webkit-text-stroke:0.35px #6ee79a;letter-spacing:0.3px;-webkit-text-stroke:0.25px #6ee79a">public</div>
<div class="abs t" style="left:892px;top:535px;font-size:14px;color:#ffffff;font-weight:normal;letter-spacing:0.5px;-webkit-text-stroke:0.15px #ffffff;">jpg</div>
<svg class="abs" style="left:1074px;top:535px" width="15" height="15" viewBox="0 0 20 20" fill="#f9a8d4" ><path fill-rule="evenodd" clip-rule="evenodd" d="M5.433 13.917l1.262-3.155A4 4 0 017.58 9.42l6.92-6.918a2.121 2.121 0 013 3l-6.92 6.918c-.383.383-.84.685-1.343.886l-3.154 1.262a.5.5 0 01-.65-.65z M3.5 5.75c0-.69.56-1.25 1.250-1.25H10A.75.75 0 0010 3H4.75A2.75 2.75 0 002 5.750v9.5A2.75 2.75 0 004.75 18h9.5A2.75 2.75 0 0017 15.25V10a.75.75 0 00-1.5 0v5.25c0 .69-.56 1.25-1.25 1.25h-9.5c-.69 0-1.25-.56-1.25-1.25v-9.5z"/></svg>
<div class="abs t" style="left:1093px;top:535px;font-size:14px;color:#f9a8d4;font-weight:bold;">Edit</div>
<svg class="abs" style="left:1130px;top:534px" width="16" height="16" viewBox="0 0 20 20" fill="#fca5a5" ><path fill-rule="evenodd" clip-rule="evenodd" d="M8.75 1A2.75 2.75 0 006 3.75v.443c-.795.077-1.584.176-2.365.298a.75.75 0 10.23 1.482l.149-.022.841 10.518A2.75 2.75 0 007.596 19h4.807a2.75 2.75 0 002.742-2.53l.841-10.52.149.023a.75.75 0 00.23-1.482A41.03 41.03 0 0014 4.193V3.75A2.75 2.75 0 0011.25 1h-2.5zM10 4c.84 0 1.673.025 2.5.075V3.75c0-.69-.56-1.25-1.25-1.25h-2.5c-.69 0-1.25.56-1.25 1.25v.325C8.327 4.025 9.16 4 10 4zM8.58 7.72a.75.75 0 00-1.5.06l.3 7.5a.75.75 0 101.5-.06l-.3-7.5zm4.34.06a.75.75 0 10-1.5-.06l-.3 7.5a.75.75 0 101.5.06l.3-7.5z"/></svg>
<div class="abs t" style="left:1150px;top:535px;font-size:14px;color:#fca5a5;font-weight:bold;">Delete</div>
<div class="abs" style="left:0;top:570px;width:1218px;height:1px;background:#242428"></div>
<div class="abs" style="left:24px;top:591px;width:18px;height:18px;border-radius:6px;background:rgba(255,255,255,0.05);box-shadow:inset 0 0 0 1px rgba(255,255,255,0.17)"></div>
<div class="abs t" style="left:65px;top:592px;font-size:14px;color:#ffffff;font-weight:normal;letter-spacing:0.5px;-webkit-text-stroke:0.15px #ffffff;">alexisren</div>
<svg class="abs" style="left:341px;top:592px" width="16" height="16" viewBox="0 0 20 20" fill="#71717a" ><path fill-rule="evenodd" clip-rule="evenodd" d="M4.25 5.5a.75.75 0 00-.75.75v8.5c0 .414.336.75.75.75h8.5a.75.75 0 00.75-.75v-4a.75.75 0 011.5 0v4A2.25 2.25 0 0112.75 17h-8.5A2.25 2.25 0 012 14.75v-8.5A2.25 2.25 0 014.25 4h5a.75.75 0 010 1.5h-5zM6.194 12.753a.75.75 0 001.06.053L16.5 4.44v2.81a.75.75 0 001.5 0v-4.5a.75.75 0 00-.75-.75h-4.5a.75.75 0 000 1.5h2.553l-9.056 8.194a.75.75 0 00-.053 1.06z"/></svg>
<div class="abs t" style="left:355.6px;top:592px;font-size:14px;color:#ffffff;font-weight:normal;letter-spacing:0.5px;-webkit-text-stroke:0.15px #ffffff;">&nbsp;Open file</div>
<div class="abs" style="left:570px;top:590px;width:45px;height:20px;border-radius:6px;background:#17291e;box-shadow:inset 0 0 0 1px #1f5a35"></div>
<div class="abs t" style="left:576px;top:594px;font-size:12px;color:#6ee79a;font-weight:normal;letter-spacing:0.7px;-webkit-text-stroke:0.35px #6ee79a;letter-spacing:0.3px;-webkit-text-stroke:0.25px #6ee79a">public</div>
<div class="abs t" style="left:892px;top:592px;font-size:14px;color:#ffffff;font-weight:normal;letter-spacing:0.5px;-webkit-text-stroke:0.15px #ffffff;">jpg</div>
<svg class="abs" style="left:1074px;top:592px" width="15" height="15" viewBox="0 0 20 20" fill="#f9a8d4" ><path fill-rule="evenodd" clip-rule="evenodd" d="M5.433 13.917l1.262-3.155A4 4 0 017.58 9.42l6.92-6.918a2.121 2.121 0 013 3l-6.92 6.918c-.383.383-.84.685-1.343.886l-3.154 1.262a.5.5 0 01-.65-.65z M3.5 5.75c0-.69.56-1.25 1.250-1.25H10A.75.75 0 0010 3H4.75A2.75 2.75 0 002 5.750v9.5A2.75 2.75 0 004.75 18h9.5A2.75 2.75 0 0017 15.25V10a.75.75 0 00-1.5 0v5.25c0 .69-.56 1.25-1.25 1.25h-9.5c-.69 0-1.25-.56-1.25-1.25v-9.5z"/></svg>
<div class="abs t" style="left:1093px;top:592px;font-size:14px;color:#f9a8d4;font-weight:bold;">Edit</div>
<svg class="abs" style="left:1130px;top:591px" width="16" height="16" viewBox="0 0 20 20" fill="#fca5a5" ><path fill-rule="evenodd" clip-rule="evenodd" d="M8.75 1A2.75 2.75 0 006 3.75v.443c-.795.077-1.584.176-2.365.298a.75.75 0 10.23 1.482l.149-.022.841 10.518A2.75 2.75 0 007.596 19h4.807a2.75 2.75 0 002.742-2.53l.841-10.52.149.023a.75.75 0 00.23-1.482A41.03 41.03 0 0014 4.193V3.75A2.75 2.75 0 0011.25 1h-2.5zM10 4c.84 0 1.673.025 2.5.075V3.75c0-.69-.56-1.25-1.25-1.25h-2.5c-.69 0-1.25.56-1.25 1.25v.325C8.327 4.025 9.16 4 10 4zM8.58 7.72a.75.75 0 00-1.5.06l.3 7.5a.75.75 0 101.5-.06l-.3-7.5zm4.34.06a.75.75 0 10-1.5-.06l-.3 7.5a.75.75 0 101.5.06l.3-7.5z"/></svg>
<div class="abs t" style="left:1150px;top:592px;font-size:14px;color:#fca5a5;font-weight:bold;">Delete</div>
<div class="abs" style="left:0;top:627px;width:1218px;height:1px;background:#242428"></div>
<div class="abs" style="left:24px;top:648px;width:18px;height:18px;border-radius:6px;background:rgba(255,255,255,0.05);box-shadow:inset 0 0 0 1px rgba(255,255,255,0.17)"></div>
<div class="abs t" style="left:65px;top:649px;font-size:14px;color:#ffffff;font-weight:normal;letter-spacing:0.5px;-webkit-text-stroke:0.15px #ffffff;">alenawitch</div>
<svg class="abs" style="left:341px;top:649px" width="16" height="16" viewBox="0 0 20 20" fill="#71717a" ><path fill-rule="evenodd" clip-rule="evenodd" d="M4.25 5.5a.75.75 0 00-.75.75v8.5c0 .414.336.75.75.75h8.5a.75.75 0 00.75-.75v-4a.75.75 0 011.5 0v4A2.25 2.25 0 0112.75 17h-8.5A2.25 2.25 0 012 14.75v-8.5A2.25 2.25 0 014.25 4h5a.75.75 0 010 1.5h-5zM6.194 12.753a.75.75 0 001.06.053L16.5 4.44v2.81a.75.75 0 001.5 0v-4.5a.75.75 0 00-.75-.75h-4.5a.75.75 0 000 1.5h2.553l-9.056 8.194a.75.75 0 00-.053 1.06z"/></svg>
<div class="abs t" style="left:355.6px;top:649px;font-size:14px;color:#ffffff;font-weight:normal;letter-spacing:0.5px;-webkit-text-stroke:0.15px #ffffff;">&nbsp;Open file</div>
<div class="abs" style="left:570px;top:647px;width:45px;height:20px;border-radius:6px;background:#17291e;box-shadow:inset 0 0 0 1px #1f5a35"></div>
<div class="abs t" style="left:576px;top:651px;font-size:12px;color:#6ee79a;font-weight:normal;letter-spacing:0.7px;-webkit-text-stroke:0.35px #6ee79a;letter-spacing:0.3px;-webkit-text-stroke:0.25px #6ee79a">public</div>
<div class="abs t" style="left:892px;top:649px;font-size:14px;color:#ffffff;font-weight:normal;letter-spacing:0.5px;-webkit-text-stroke:0.15px #ffffff;">jpg</div>
<svg class="abs" style="left:1074px;top:649px" width="15" height="15" viewBox="0 0 20 20" fill="#f9a8d4" ><path fill-rule="evenodd" clip-rule="evenodd" d="M5.433 13.917l1.262-3.155A4 4 0 017.58 9.42l6.92-6.918a2.121 2.121 0 013 3l-6.92 6.918c-.383.383-.84.685-1.343.886l-3.154 1.262a.5.5 0 01-.65-.65z M3.5 5.75c0-.69.56-1.25 1.250-1.25H10A.75.75 0 0010 3H4.75A2.75 2.75 0 002 5.750v9.5A2.75 2.75 0 004.75 18h9.5A2.75 2.75 0 0017 15.25V10a.75.75 0 00-1.5 0v5.25c0 .69-.56 1.25-1.25 1.25h-9.5c-.69 0-1.25-.56-1.25-1.25v-9.5z"/></svg>
<div class="abs t" style="left:1093px;top:649px;font-size:14px;color:#f9a8d4;font-weight:bold;">Edit</div>
<svg class="abs" style="left:1130px;top:648px" width="16" height="16" viewBox="0 0 20 20" fill="#fca5a5" ><path fill-rule="evenodd" clip-rule="evenodd" d="M8.75 1A2.75 2.75 0 006 3.75v.443c-.795.077-1.584.176-2.365.298a.75.75 0 10.23 1.482l.149-.022.841 10.518A2.75 2.75 0 007.596 19h4.807a2.75 2.75 0 002.742-2.53l.841-10.52.149.023a.75.75 0 00.23-1.482A41.03 41.03 0 0014 4.193V3.75A2.75 2.75 0 0011.25 1h-2.5zM10 4c.84 0 1.673.025 2.5.075V3.75c0-.69-.56-1.25-1.25-1.25h-2.5c-.69 0-1.25.56-1.25 1.25v.325C8.327 4.025 9.16 4 10 4zM8.58 7.72a.75.75 0 00-1.5.06l.3 7.5a.75.75 0 101.5-.06l-.3-7.5zm4.34.06a.75.75 0 10-1.5-.06l-.3 7.5a.75.75 0 101.5.06l.3-7.5z"/></svg>
<div class="abs t" style="left:1150px;top:649px;font-size:14px;color:#fca5a5;font-weight:bold;">Delete</div>
<div class="abs" style="left:0;top:684px;width:1218px;height:1px;background:#303033"></div>
<div class="abs t" style="left:25px;top:708px;font-size:14px;color:#e4e4e7;font-weight:normal;letter-spacing:0.7px;-webkit-text-stroke:0.35px #e4e4e7;letter-spacing:0.4px">Showing 37,951 to 37,960 of 37,964 results</div>
<div class="abs" style="left:535px;top:696px;width:148px;height:38px;border-radius:8px;background:#222225;box-shadow:inset 0 0 0 1px #39393d"></div>
<div class="abs" style="left:619px;top:697px;width:1px;height:36px;background:#39393d"></div>
<div class="abs t" style="left:548px;top:708px;font-size:14px;color:#a1a1aa;font-weight:normal;letter-spacing:0.5px;-webkit-text-stroke:0.15px #a1a1aa;">Per page</div>
<div class="abs t" style="left:632px;top:708px;font-size:14px;color:#ffffff;font-weight:normal;letter-spacing:0.5px;-webkit-text-stroke:0.15px #ffffff;letter-spacing:-0.3px">10</div>
<svg class="abs" style="left:653px;top:706px" width="20" height="20" viewBox="0 0 20 20" fill="#71717a" ><path fill-rule="evenodd" clip-rule="evenodd" d="M5.23 7.21a.75.75 0 011.06.02L10 11.168l3.71-3.938a.75.75 0 111.08 1.04l-4.25 4.5a.75.75 0 01-1.08 0l-4.25-4.5a.75.75 0 01.02-1.06z"/></svg>
<div class="abs" style="left:727px;top:696px;width:467px;height:38px;border-radius:8px;background:#222225;overflow:hidden">
<div class="abs" style="left:0px;top:0;width:38px;height:38px;"></div>
<div class="abs" style="left:38px;top:0;width:1px;height:38px;background:#39393d"></div>
<svg class="abs" style="left:8px;top:10px" width="20" height="20" viewBox="0 0 20 20" fill="#71717a" ><path fill-rule="evenodd" clip-rule="evenodd" d="M12.79 5.23a.75.75 0 01-.02 1.06L8.832 10l3.938 3.71a.75.75 0 11-1.04 1.08l-4.5-4.25a.75.75 0 010-1.08l4.5-4.25a.75.75 0 011.06.02z"/></svg>
<div class="abs" style="left:38px;top:0;width:36px;height:38px;"></div>
<div class="abs" style="left:74px;top:0;width:1px;height:38px;background:#39393d"></div>
<div class="abs t" style="left:38px;top:12px;width:36px;text-align:center;font-size:14px;font-weight:bold;color:#e4e4e7">1</div>
<div class="abs" style="left:74px;top:0;width:38px;height:38px;"></div>
<div class="abs" style="left:112px;top:0;width:1px;height:38px;background:#39393d"></div>
<div class="abs t" style="left:74px;top:12px;width:38px;text-align:center;font-size:14px;font-weight:bold;color:#e4e4e7">2</div>
<div class="abs" style="left:112px;top:0;width:44px;height:38px;"></div>
<div class="abs" style="left:156px;top:0;width:1px;height:38px;background:#39393d"></div>
<div class="abs t" style="left:112px;top:12px;width:44px;text-align:center;font-size:14px;font-weight:bold;color:#e4e4e7">...</div>
<div class="abs" style="left:156px;top:0;width:69px;height:38px;"></div>
<div class="abs" style="left:225px;top:0;width:1px;height:38px;background:#39393d"></div>
<div class="abs t" style="left:156px;top:12px;width:69px;text-align:center;font-size:14px;font-weight:bold;color:#e4e4e7">3,794</div>
<div class="abs" style="left:225px;top:0;width:68px;height:38px;"></div>
<div class="abs" style="left:293px;top:0;width:1px;height:38px;background:#39393d"></div>
<div class="abs t" style="left:225px;top:12px;width:68px;text-align:center;font-size:14px;font-weight:bold;color:#e4e4e7">3,795</div>
<div class="abs" style="left:293px;top:0;width:69px;height:38px;background:#2c2c2f;"></div>
<div class="abs" style="left:362px;top:0;width:1px;height:38px;background:#39393d"></div>
<div class="abs t" style="left:293px;top:12px;width:69px;text-align:center;font-size:14px;font-weight:bold;color:#fa5cb0">3,796</div>
<div class="abs" style="left:362px;top:0;width:67px;height:38px;"></div>
<div class="abs" style="left:429px;top:0;width:1px;height:38px;background:#39393d"></div>
<div class="abs t" style="left:362px;top:12px;width:67px;text-align:center;font-size:14px;font-weight:bold;color:#e4e4e7">3,797</div>
<div class="abs" style="left:429px;top:0;width:38px;height:38px;"></div>
<svg class="abs" style="left:437px;top:10px" width="20" height="20" viewBox="0 0 20 20" fill="#71717a" ><path fill-rule="evenodd" clip-rule="evenodd" d="M7.21 14.77a.75.75 0 01.02-1.06L11.168 10 7.23 6.29a.75.75 0 111.04-1.08l4.5 4.25a.75.75 0 010 1.08l-4.5 4.25a.75.75 0 01-1.06-.02z"/></svg>
<div class="abs" style="left:0;top:0;width:467px;height:38px;border-radius:8px;box-shadow:inset 0 0 0 1px #39393d"></div>
</div>
</div>
</body></html>
